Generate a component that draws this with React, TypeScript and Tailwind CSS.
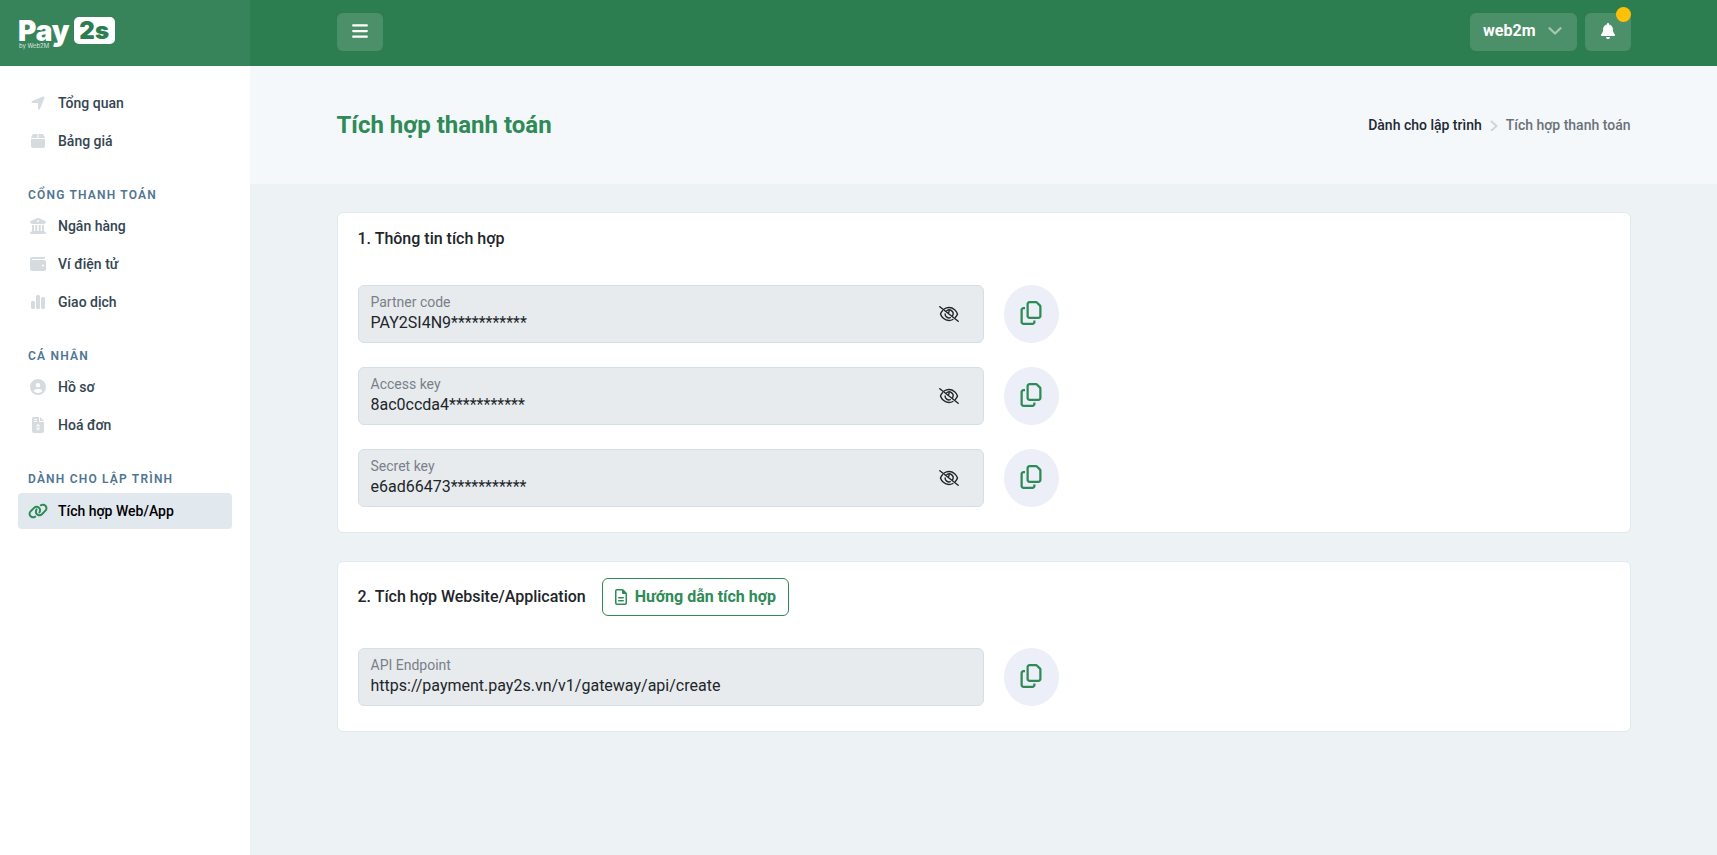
import { useState } from "react";
import type { ReactNode } from "react";
import {
  FaBars,
  FaBell,
  FaBuildingColumns,
  FaChartSimple,
  FaCircleUser,
  FaLink,
  FaLocationArrow,
  FaRegCopy,
  FaRegFileLines,
} from "react-icons/fa6";

const BoxIcon = () => (
  <svg viewBox="0 0 448 448" className="h-3.5 w-3.5" fill="currentColor">
    <path d="M208 0H94C72 0 53 12 44 31L6 112c-3 5-4 10-5 16h207V0zm32 0v128h207c-1-6-2-11-5-16l-38-81C395 12 376 0 354 0H240zM448 160H0v224c0 35 29 64 64 64h320c35 0 64-29 64-64V160z" />
  </svg>
);

const WalletIcon = () => (
  <svg viewBox="0 0 512 448" className="h-3.5 w-4" fill="currentColor">
    <path d="M448 0c18 0 32 14 32 32s-14 32-32 32H80c-9 0-16 7-16 16s7 16 16 16h368c35 0 64 29 64 64v224c0 35-29 64-64 64H64c-35 0-64-29-64-64V64C0 29 29 0 64 0h384zm-32 304a32 32 0 1 0 0-64 32 32 0 1 0 0 64z" />
  </svg>
);

const InvoiceIcon = () => (
  <svg viewBox="0 0 384 512" className="h-4 w-3">
    <path
      fill="currentColor"
      fillRule="evenodd"
      d="M64 0C29 0 0 29 0 64v384c0 35 29 64 64 64h256c35 0 64-29 64-64V160H256c-18 0-32-14-32-32V0H64zm192 0v128h128L256 0zM64 64v32h96V64H64zm0 64v32h96v-32H64z"
    />
    <path
      d="M240 272c-20-14-92-18-92 20 0 44 96 20 96 66 0 40-72 38-104 16M192 232v32m0 128v32"
      fill="none"
      stroke="#fff"
      strokeWidth="32"
      strokeLinecap="round"
    />
  </svg>
);

const EyeSlashIcon = () => (
  <svg viewBox="0 0 20 16" className="h-4 w-5" fill="none" stroke="currentColor" strokeWidth="1.4" strokeLinecap="round">
    <path d="M.8.8l18.400 14.400" />
    <path d="M5.2 3C6.5 2.1 8.1 1.5 10 1.5c4.600 0 7.600 3.600 8.500 6.500-.4 1.200-1.100 2.500-2.200 3.600" />
    <path d="M3.500 4.700C2.500 5.800 1.800 7 1.500 8c.9 2.900 3.900 6.500 8.500 6.500 1.500 0 2.800-.4 3.900-1" />
    <path d="M7.300 5.100A3.900 3.900 0 0 1 13.600 9.600" />
    <path d="M6.100 7.900A3.900 3.900 0 0 0 11.300 11.700" />
    <path d="M10 4.500c.3 1.200 0 2-.6 2.500" />
  </svg>
);

const navGroups: { title?: string; items: { name: string; icon: ReactNode; active?: boolean }[] }[] = [
  {
    items: [
      { name: "Tổng quan", icon: <FaLocationArrow className="h-4 w-3.5" /> },
      { name: "Bảng giá", icon: <BoxIcon /> },
    ],
  },
  {
    title: "Cổng thanh toán",
    items: [
      { name: "Ngân hàng", icon: <FaBuildingColumns className="h-4 w-4" /> },
      { name: "Ví điện tử", icon: <WalletIcon /> },
      { name: "Giao dịch", icon: <FaChartSimple className="h-4 w-4" /> },
    ],
  },
  {
    title: "Cá nhân",
    items: [
      { name: "Hồ sơ", icon: <FaCircleUser className="h-4 w-4" /> },
      { name: "Hoá đơn", icon: <InvoiceIcon /> },
    ],
  },
  {
    title: "Dành cho lập trình",
    items: [{ name: "Tích hợp Web/App", icon: <FaLink className="h-4 w-5" />, active: true }],
  },
];

const Logo = () => (
  <a href="#" className="flex h-[66px] items-start bg-[#37845a] pt-[17px] pl-[18px] text-white">
    <span className="flex flex-col font-[Inter,sans-serif]">
      <span className="text-[28px] leading-7 font-black">Pay</span>
      <span className="-mt-0.5 pl-px text-[6px] leading-[6px] font-light">by Web2M</span>
    </span>
    <span className="ml-1 flex h-[27px] w-[41px] items-center justify-center rounded-[5px] bg-white font-[Inter,sans-serif] text-2xl leading-none font-black text-[#2c7d50]">
      2s
    </span>
  </a>
);

const Sidebar = () => (
  <aside className="w-[250px] shrink-0 bg-white">
    <Logo />
    <nav className="px-[18px] pt-[18px]">
      {navGroups.map((group, i) => (
        <div key={i}>
          {group.title && (
            <h2 className="h-[47px] px-2.5 pt-[26px] text-xs leading-[18px] font-semibold tracking-[1.2px] text-[#4f7592] uppercase">
              {group.title}
            </h2>
          )}
          <ul>
            {group.items.map((item) => (
              <li key={item.name}>
                <a
                  href="#"
                  className={
                    item.active
                      ? "mt-0.5 flex h-9 items-center rounded bg-[#e1e9ef] px-2.5 text-sm font-medium text-black"
                      : "flex h-[38px] items-center px-2.5 text-sm font-medium text-[#334552]"
                  }
                >
                  <span
                    className={
                      item.active
                        ? "mr-2.5 flex w-5 justify-center text-[#2e8b57]"
                        : "mr-2.5 flex w-5 justify-center text-[#d6dbdf]"
                    }
                  >
                    {item.icon}
                  </span>
                  {item.name}
                </a>
              </li>
            ))}
          </ul>
        </div>
      ))}
    </nav>
  </aside>
);

const Header = () => (
  <header className="bg-[#2c7d50]">
    <div className="mx-auto flex h-[66px] max-w-[1350px] items-center justify-between px-7 pb-0.5">
      <button type="button" aria-label="Menu" className="flex h-[38px] w-[46px] items-center justify-center rounded-md bg-[#4c906a] pb-0.5 text-white">
        <FaBars className="h-[18px] w-4" />
      </button>
      <div className="flex gap-2">
        <button type="button" className="flex h-[38px] items-center gap-3 rounded-md bg-[#4c906a] px-[13px] pb-0.5 font-bold text-white">
          web2m
          <svg viewBox="0 0 14 8" className="mr-0.5 h-2 w-3.5" fill="none" stroke="#a6c8b5" strokeWidth="2.2" strokeLinecap="round" strokeLinejoin="round">
            <path d="M1.500 1.200L7 6.500l5.500-5.300" />
          </svg>
        </button>
        <button type="button" aria-label="Thông báo" className="relative flex h-[38px] w-[46px] items-center justify-center rounded-md bg-[#4c906a] pb-0.5 text-white">
          <FaBell className="h-4 w-4" />
          <span className="absolute -top-1.5 right-0 h-[15px] w-[15px] rounded-full bg-[#ffc107]"></span>
        </button>
      </div>
    </div>
  </header>
);

type FieldProps = {
  id: string;
  label: string;
  value: string;
  secret?: boolean;
};

const CopyField = ({ id, label, value, secret }: FieldProps) => {
  const [copied, setCopied] = useState(false);

  const handleCopy = () => {
    navigator.clipboard?.writeText(value);
    setCopied(true);
  };

  return (
    <div className="flex gap-5">
      <div className="flex h-[58px] w-1/2 items-center rounded-md border border-[#d3e0e8] bg-[#e7ebee] pr-6 pl-3">
        <div className="flex grow flex-col pb-[3px]">
          <label htmlFor={id} className="text-sm leading-[21px] text-[#79808a]">
            {label}
          </label>
          <input id={id} readOnly value={value} className="w-full text-base leading-5 text-[#212529] outline-none" />
        </div>
        {secret && (
          <button type="button" aria-label={`Hiện ${label}`} className="text-[#212529]">
            <EyeSlashIcon />
          </button>
        )}
      </div>
      <button
        type="button"
        aria-label={copied ? "Đã sao chép" : `Sao chép ${label}`}
        onClick={handleCopy}
        className="flex h-[58px] w-[55px] items-center justify-center rounded-[50%] bg-[#eceff7] pb-0.5 text-[#2e8b57]"
      >
        <FaRegCopy className="h-6 w-6" />
      </button>
    </div>
  );
};

const App = () => (
  <div className="flex min-h-screen bg-[#edf2f5] font-[Roboto,'Noto_Sans',sans-serif] text-[#212529]">
    <Sidebar />
    <div className="min-w-0 grow">
      <Header />
      <div className="bg-[#f4f8fb]">
        <div className="mx-auto flex h-[118px] max-w-[1350px] items-center justify-between px-7">
          <h1 className="text-2xl font-bold text-[#2e8b57]">Tích hợp thanh toán</h1>
          <nav className="flex items-center text-sm font-medium">
            <a href="#" className="text-[#1f2933]">Dành cho lập trình</a>
            <svg viewBox="0 0 8 12" className="mx-2 h-3 w-2" fill="none" stroke="#ced4da" strokeWidth="2" strokeLinecap="round" strokeLinejoin="round">
              <path d="M1.500 2.500L6.500 7l-5 4.500" />
            </svg>
            <span className="text-[#6a7278]">Tích hợp thanh toán</span>
          </nav>
        </div>
      </div>
      <main className="mx-auto flex max-w-[1350px] flex-col gap-7 p-7">
        <section className="rounded-md border border-[#dfe9ee] bg-white px-5 pb-[25px]">
          <h3 className="pt-3.5 pb-[34px] text-base font-medium">1. Thông tin tích hợp</h3>
          <div className="flex flex-col gap-6">
            <CopyField id="partner-code" label="Partner code" value="PAY2SI4N9***********" secret />
            <CopyField id="access-key" label="Access key" value="8ac0ccda4***********" secret />
            <CopyField id="secret-key" label="Secret key" value="e6ad66473***********" secret />
          </div>
        </section>
        <section className="rounded-md border border-[#dfe9ee] bg-white px-5 pb-[25px]">
          <div className="flex items-center gap-4 pt-4 pb-8">
            <h3 className="text-base font-medium">2. Tích hợp Website/Application</h3>
            <a href="#" className="flex h-[38px] items-center gap-2 rounded-md border border-[#2e8b57] px-3 font-bold text-[#2e8b57]">
              <FaRegFileLines className="h-4 w-3" />
              Hướng dẫn tích hợp
            </a>
          </div>
          <CopyField id="api-endpoint" label="API Endpoint" value="https://payment.pay2s.vn/v1/gateway/api/create" />
        </section>
      </main>
    </div>
  </div>
);

export default App;
